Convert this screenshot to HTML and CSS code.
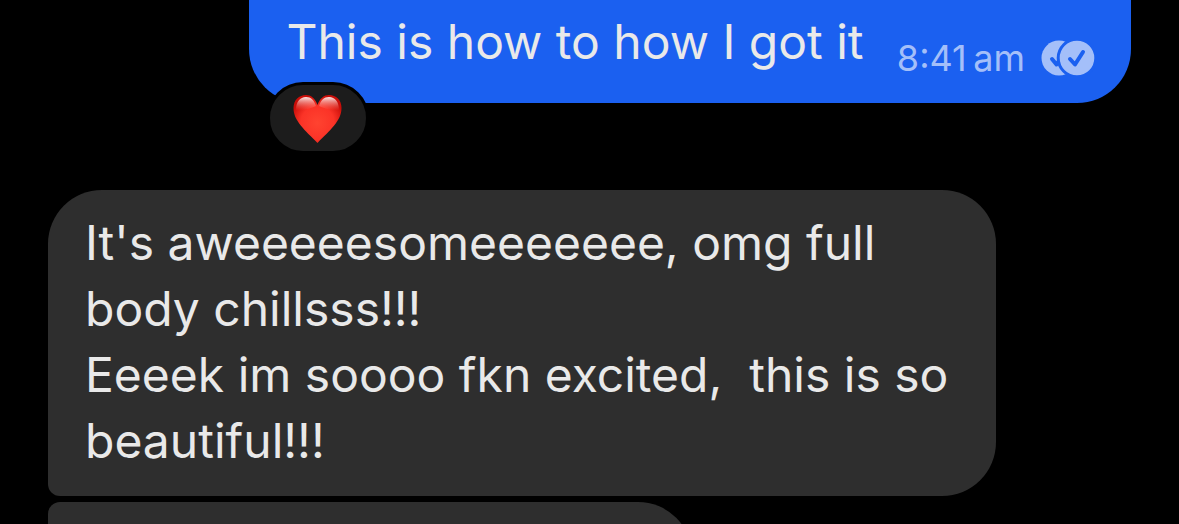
FILE: index.html
```
<!DOCTYPE html>
<html lang="en">
<head>
    <meta charset="UTF-8">
    <meta name="viewport" content="width=device-width, initial-scale=1">
    <title>Chat</title>
    <link rel="stylesheet" href="styles.css">
</head>
<body>
    <main class="chat">
        <div class="message sent">
            <p class="text">This is how to how I got it</p>
            <div class="meta">
                <time datetime="08:41">8:41&#8239;am</time>
                <svg class="read" viewBox="0 0 54 36" role="img" aria-label="Read">
                    <circle class="disc" cx="18" cy="18" r="17.5"/>
                    <path class="tick" d="M11 19l4.500 5.500 8-12"/>
                    <circle class="disc front" cx="36" cy="18" r="18.8"/>
                    <path class="tick" d="M29 19l5 5.500 8-12.500"/>
                </svg>
            </div>
            <button type="button" class="reaction" aria-label="Heart reaction">
                <svg class="heart" viewBox="0 0 50 50">
                    <defs>
                        <radialGradient id="red" cx="0.5" cy="0.58" r="0.58">
                            <stop offset="0" stop-color="#ff4330"/>
                            <stop offset="0.6" stop-color="#fb3327"/>
                            <stop offset="1" stop-color="#c90d08"/>
                        </radialGradient>
                        <linearGradient id="shine" x1="0" y1="0" x2="0" y2="1">
                            <stop offset="0" stop-color="#fff" stop-opacity="0.9"/>
                            <stop offset="1" stop-color="#ff8d80" stop-opacity="0"/>
                        </linearGradient>
                    </defs>
                    <path fill="url(#red)" d="M24.500 12C22 5 18 2 13 2C6 2 0.500 7 0.500 15C0.500 28 12 37 24.500 50C37 37 48.500 28 48.500 15C48.500 7 43 2 36 2C31 2 27 5 24.500 12Z"/>
                    <path fill="url(#shine)" d="M3 17C3 9 7 4 13 4C18 4 21 7 23 13C18 15 12 18 3 17Z"/>
                    <path fill="url(#shine)" d="M46 17C46 9 42 4 36 4C31 4 28 7 26 13C31 15 37 18 46 17Z"/>
                </svg>
            </button>
        </div>

        <div class="message received first">
            <p class="text">It's aweeeeesomeeeeeee, omg full body chillsss!!!
Eeeek im soooo fkn excited,  this is so beautiful!!!</p>
        </div>
        <div class="message received next"></div>
    </main>
</body>
</html>
```

FILE: styles.css
```
* {
    box-sizing: border-box;
}

body {
    margin: 0;
    background: #000;
    color: #e9e9e9;
    font-family: Inter, "Liberation Sans", sans-serif;
    font-size: 48px;
    line-height: 66px;
}

.chat {
    display: flex;
    flex-direction: column;
    height: 100vh;
    padding: 0 48px;
    overflow: hidden;
}

.message {
    flex-shrink: 0;
    border-radius: 54px;
}

.text {
    margin: 0;
    white-space: pre-wrap;
}

.sent {
    position: relative;
    display: flex;
    flex-wrap: wrap;
    justify-content: space-between;
    align-self: flex-end;
    width: 81.4%;
    margin-bottom: 87px;
    padding: 9px 36px 28px 37px;
    border-top-left-radius: 0;
    border-top-right-radius: 0;
    background: #1b60f0;
}

.meta {
    display: flex;
    align-items: center;
    align-self: flex-end;
    gap: 16px;
    height: 34px;
    color: #a4bff9;
    font-size: 36px;
    line-height: 40px;
}

.read {
    width: 54px;
    height: 36px;
}

.disc {
    fill: #a4bff9;
}

.front {
    stroke: #1b60f0;
    stroke-width: 3;
}

.tick {
    fill: none;
    stroke: #1b60f0;
    stroke-width: 4;
    stroke-linecap: round;
    stroke-linejoin: round;
}

.reaction {
    position: absolute;
    left: 18px;
    bottom: -51px;
    display: flex;
    align-items: center;
    justify-content: center;
    width: 102px;
    height: 72px;
    padding: 0;
    border: 3px solid #000;
    border-radius: 36px;
    background: #1c1c1c;
}

.heart {
    width: 50px;
    height: 50px;
}

.received {
    align-self: flex-start;
    background: #2e2e2e;
}

.first {
    width: 87.5%;
    margin-bottom: 6px;
    padding: 20px 37px 22px;
    border-bottom-left-radius: 12px;
}

.next {
    width: 59.5%;
    height: 108px;
    border-top-left-radius: 12px;
}
```
